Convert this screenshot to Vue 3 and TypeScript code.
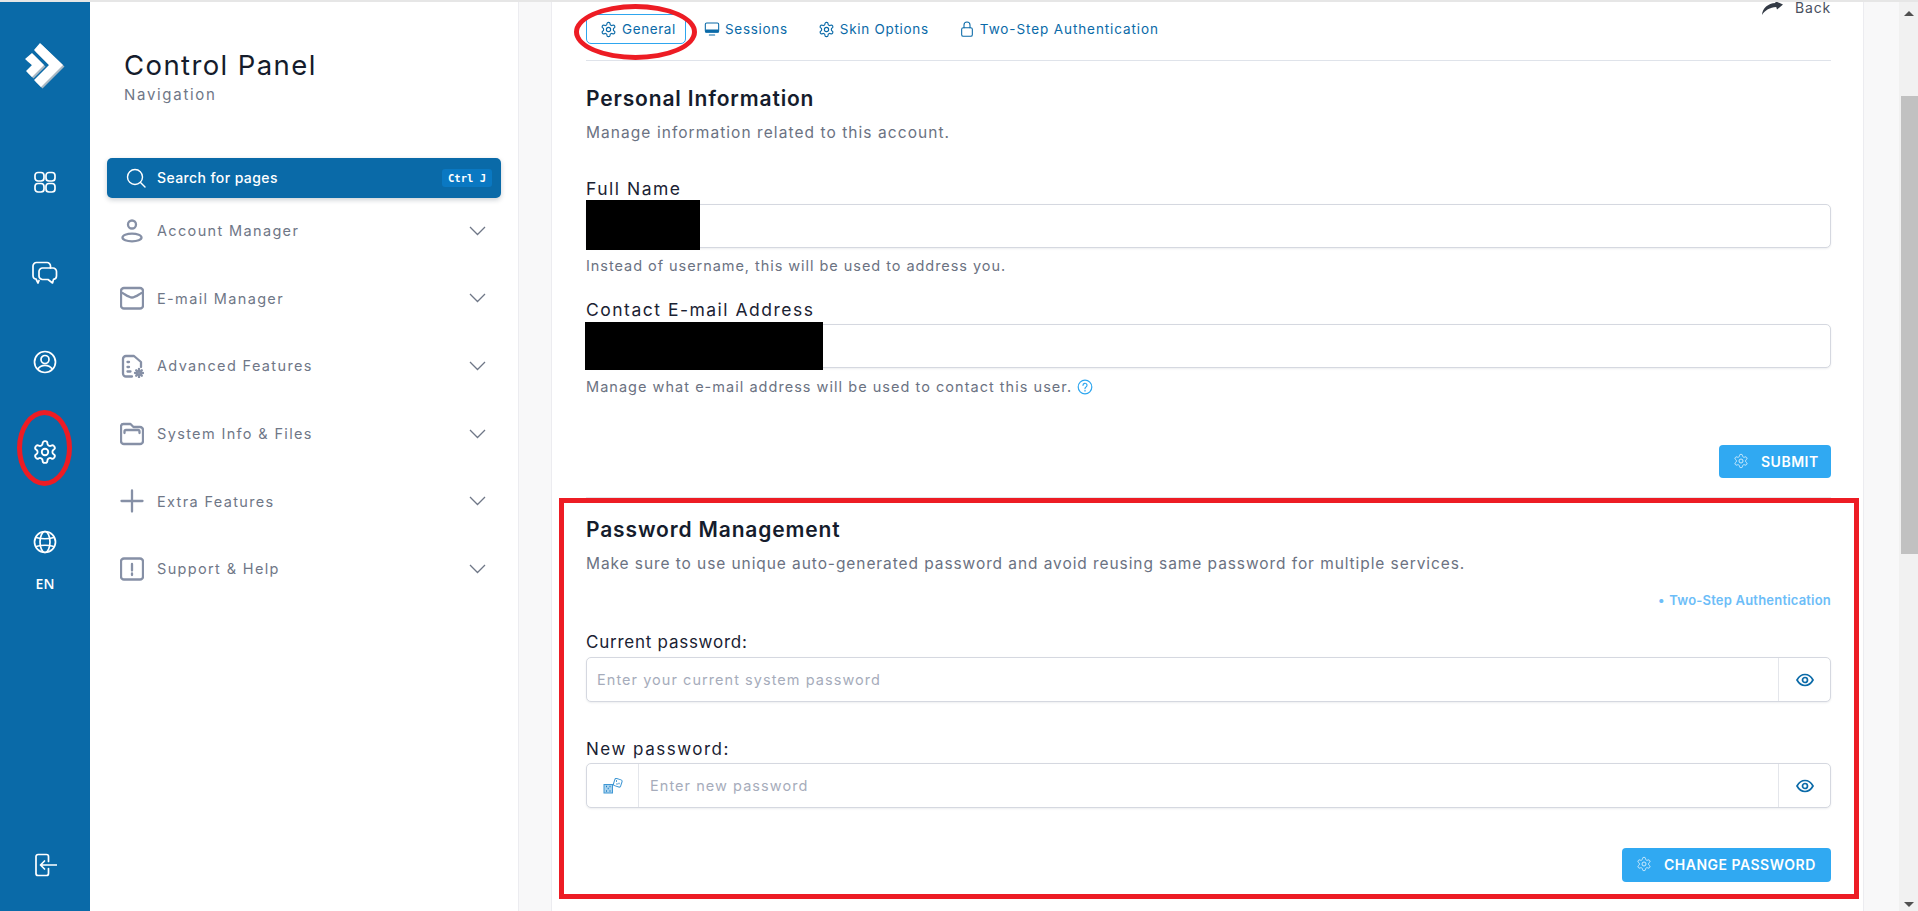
<script setup lang="ts">
interface NavItem {
  label: string
  shapes: string[]
}

const gear =
  'M12.22 2h-.44a2 2 0 0 0-2 2v.18a2 2 0 0 1-1 1.73l-.43.25a2 2 0 0 1-2 0l-.15-.08a2 2 0 0 0-2.73.73l-.22.38a2 2 0 0 0 .73 2.73l.15.1a2 2 0 0 1 1 1.72v.51a2 2 0 0 1-1 1.74l-.15.09a2 2 0 0 0-.73 2.73l.22.38a2 2 0 0 0 2.73.73l.15-.08a2 2 0 0 1 2 0l.43.25a2 2 0 0 1 1 1.73V20a2 2 0 0 0 2 2h.44a2 2 0 0 0 2-2v-.18a2 2 0 0 1 1-1.73l.43-.25a2 2 0 0 1 2 0l.15.08a2 2 0 0 0 2.73-.73l.22-.39a2 2 0 0 0-.73-2.73l-.15-.08a2 2 0 0 1-1-1.74v-.5a2 2 0 0 1 1-1.74l.15-.09a2 2 0 0 0 .73-2.73l-.22-.38a2 2 0 0 0-2.73-.73l-.15.08a2 2 0 0 1-2 0l-.43-.25a2 2 0 0 1-1-1.73V4a2 2 0 0 0-2-2zM15 12a3 3 0 1 1-6 0 3 3 0 0 1 6 0z'

const navItems: NavItem[] = [
  {
    label: 'Account Manager',
    shapes: ['M16 5.500a4 4 0 1 1-8 0 4 4 0 0 1 8 0z', 'M21.500 18.500c0 2.200-4.200 3.800-9.500 3.800s-9.500-1.600-9.500-3.800 4.200-3.800 9.500-3.800 9.500 1.600 9.500 3.800z'],
  },
  {
    label: 'E-mail Manager',
    shapes: ['M4 2h16a3 3 0 0 1 3 3v14.500a3 3 0 0 1-3 3H4a3 3 0 0 1-3-3V5a3 3 0 0 1 3-3z', 'M2.500 7c3.500 2 6.500 4.500 9.500 4.500S18 9 21.500 7'],
  },
  {
    label: 'Advanced Features',
    shapes: [
      'M12 22.500H6a3 3 0 0 1-3-3V5a3 3 0 0 1 3-3h8l7 6v5',
      'M7.500 8h1.500M7.500 13h1.500M7.500 17.500h3',
      'M19 14.800v1.400M19 21.800v1.400M15 19h1.400M21.600 19H23M16.200 16.200l1 1M20.800 20.800l1 1M21.800 16.200l-1 1M17.200 20.800l-1 1M20.500 19a1.500 1.500 0 1 1-3 0 1.500 1.500 0 0 1 3 0z',
    ],
  },
  {
    label: 'System Info & Files',
    shapes: ['M1 18.500v-14A2.500 2.500 0 0 1 3.500 2h7l3 3h6.500a3 3 0 0 1 3 3v11a3 3 0 0 1-3 3H4a3 3 0 0 1-3-3z', 'M4.500 11V9.500A1.500 1.500 0 0 1 6 8h12a1.500 1.500 0 0 1 1.500 1.500V11'],
  },
  {
    label: 'Extra Features',
    shapes: ['M12 1.500v21M1.500 12h21'],
  },
  {
    label: 'Support & Help',
    shapes: ['M4 1.500h16a3 3 0 0 1 3 3v15a3 3 0 0 1-3 3H4a3 3 0 0 1-3-3v-15a3 3 0 0 1 3-3z', 'M12 7v6.500M12 16.500v1.500'],
  },
]
</script>

<template>
  <div class="page">
    <aside class="rail">
      <div class="logo">
        <svg width="42" height="48" viewBox="0 0 42 48">
          <path d="M17.500 2.500l23 22-22 22-7-7 15-15-15-15zM2.500 18.500l7-6 12 12-12 12-6-6 6-6z" fill="#a9b8c4" />
          <path d="M16 1l23 22-22 22-7-7 15-15L10 8zM1 17l7-6 12 12L8 35l-6-6 6-6z" fill="#fff" />
        </svg>
      </div>
      <div class="rail-item">
        <svg width="24" height="24" viewBox="0 0 24 24" class="rail-icon">
          <rect x="2" y="2.500" width="9" height="8.500" rx="3" />
          <rect x="13" y="2.500" width="9" height="8.500" rx="3" />
          <rect x="2" y="13.500" width="9" height="8.500" rx="3" />
          <rect x="13" y="13.500" width="9" height="8.500" rx="3" />
        </svg>
      </div>
      <div class="rail-item rail-chat">
        <svg width="26" height="24" viewBox="0 0 26 24" class="rail-icon">
          <path d="M7 19.500l-1 2.500-2-4c-2 0-3-1.500-3-3.500V5a3.500 3.500 0 0 1 3.500-3.500H15A3.500 3.500 0 0 1 18.500 5v2" />
          <path d="M10.500 7H21a3.500 3.500 0 0 1 3.500 3.500v4.500a3.500 3.500 0 0 1-3 3.400L20.500 22 16 18.500h-5.500A3.500 3.500 0 0 1 7 15v-4.500A3.500 3.500 0 0 1 10.500 7z" />
        </svg>
      </div>
      <div class="rail-item">
        <svg width="24" height="24" viewBox="0 0 24 24" class="rail-icon">
          <circle cx="12" cy="12" r="10.500" />
          <circle cx="12" cy="9.500" r="4" />
          <path d="M4.800 19c2-2.600 4.400-3.600 7.200-3.600s5.200 1 7.200 3.600" />
        </svg>
      </div>
      <div class="rail-item">
        <svg width="26" height="26" viewBox="0 0 24 24" class="rail-icon"><path :d="gear" /></svg>
      </div>
      <div class="rail-item">
        <svg width="24" height="24" viewBox="0 0 24 24" class="rail-icon">
          <circle cx="12" cy="12" r="10.500" />
          <ellipse cx="12" cy="12" rx="5" ry="10.500" />
          <path d="M3 7.500c5.500 1.500 12.500 1.500 18 0M3 16.500c5.500-1.500 12.500-1.500 18 0" />
        </svg>
        <span class="lang">EN</span>
      </div>
      <div class="rail-exit">
        <svg width="22" height="24" viewBox="0 0 22 24" class="rail-icon">
          <path d="M13.500 8.500v-5a2 2 0 0 0-2-2H3a2 2 0 0 0-2 2v17a2 2 0 0 0 2 2h8.500a2 2 0 0 0 2-2v-5" />
          <path d="M21.500 12H6M9.500 8l-4 4 4 4" />
        </svg>
      </div>
    </aside>

    <nav class="nav">
      <h1 class="nav-title">Control Panel</h1>
      <p class="nav-sub">Navigation</p>
      <button class="search" type="button">
        <svg width="20" height="20" viewBox="0 0 20 20" class="search-icon">
          <circle cx="9" cy="9" r="7.500" />
          <path d="M14.500 14.500L19 19" />
        </svg>
        <span class="search-label">Search for pages</span>
        <kbd class="kbd">Ctrl J</kbd>
      </button>
      <a v-for="item in navItems" :key="item.label" class="nav-row">
        <svg width="24" height="24" viewBox="0 0 24 24" class="nav-icon">
          <path v-for="d in item.shapes" :key="d" :d="d" />
        </svg>
        <span class="nav-label">{{ item.label }}</span>
        <svg width="17" height="10" viewBox="0 0 17 10" class="chevron"><path d="M1 1l7.500 7.500L16 1" /></svg>
      </a>
    </nav>

    <div class="gutter gutter-left"></div>

    <main class="main">
      <header class="tabs">
        <a class="tab tab-active">
          <svg width="17" height="17" viewBox="0 0 24 24" class="tab-icon"><path :d="gear" /></svg>
          General
        </a>
        <a class="tab">
          <svg width="16" height="16" viewBox="0 0 24 24" class="tab-icon">
            <rect x="2" y="3" width="20" height="14" rx="2" />
            <path d="M3 13.500h18v3H3z" fill="#0a6aa8" />
            <path d="M8 21h8" />
          </svg>
          Sessions
        </a>
        <a class="tab">
          <svg width="17" height="17" viewBox="0 0 24 24" class="tab-icon"><path :d="gear" /></svg>
          Skin Options
        </a>
        <a class="tab tab-last">
          <svg width="16" height="16" viewBox="0 0 24 24" class="tab-icon">
            <rect x="4" y="10" width="16" height="13" rx="2.500" />
            <path d="M7.500 10V6a4.500 4.500 0 0 1 9 0v4" />
          </svg>
          Two-Step Authentication
        </a>
        <a class="back">
          <svg width="21" height="14" viewBox="0 0 21 14"><path d="M0 14C.5 7 6 2.500 13.500 2L13 0l8 3.500-6 5-.8-2.500C8 6.500 3 9 0 14z" fill="#333a45" /></svg>
          Back
        </a>
      </header>

      <section class="personal">
        <h2 class="heading">Personal Information</h2>
        <p class="desc">Manage information related to this account.</p>

        <label class="label label-name">Full Name</label>
        <div class="field field-text">
          <input class="input" type="text" />
          <span class="redact redact-name"></span>
        </div>
        <p class="hint">Instead of username, this will be used to address you.</p>

        <label class="label label-mail">Contact E-mail Address</label>
        <div class="field field-text field-mail">
          <input class="input" type="text" />
          <span class="redact redact-mail"></span>
        </div>
        <p class="hint">
          Manage what e-mail address will be used to contact this user.
          <svg width="16" height="16" viewBox="0 0 16 16" class="help">
            <circle cx="8" cy="8" r="6.800" />
            <path d="M6 6.300a2 2 0 1 1 3 1.700c-.7.400-1 .8-1 1.600M8 11.300v.8" />
          </svg>
        </p>

        <div class="actions actions-submit">
          <button class="btn btn-submit" type="button">
            <svg width="16" height="16" viewBox="0 0 24 24" class="btn-icon"><path :d="gear" /></svg>
            SUBMIT
          </button>
        </div>
      </section>

      <section class="password">
        <h2 class="heading heading-pass">Password Management</h2>
        <p class="desc">Make sure to use unique auto-generated password and avoid reusing same password for multiple services.</p>
        <div class="step-link"><span class="step-dot">•</span> Two-Step Authentication</div>

        <label class="label label-current">Current password:</label>
        <div class="field field-pass">
          <input class="input" type="text" placeholder="Enter your current system password" />
          <span class="addon addon-eye">
            <svg width="18" height="14" viewBox="0 0 18 14" class="eye">
              <path d="M1 7c2-3.600 4.800-5.500 8-5.500S15 3.400 17 7c-2 3.600-4.800 5.500-8 5.500S3 10.600 1 7z" />
              <circle cx="9" cy="7" r="2.500" />
            </svg>
          </span>
        </div>

        <label class="label label-new">New password:</label>
        <div class="field field-pass">
          <span class="addon addon-dice">
            <svg width="20" height="16" viewBox="0 0 20 16" class="dice">
              <rect x="1" y="6.500" width="8.500" height="8.500" fill="#a9d3ef" />
              <rect x="11" y="1" width="7.500" height="7.500" rx="1.500" transform="rotate(18 14.750 4.750)" />
              <path class="dice-dots" d="M3 8.500h1M6.500 8.500h1M4.700 10.500h1M3 13h1M6.500 13h1M13 3h1M15.500 5.500h1M13.500 6h1" />
            </svg>
          </span>
          <input class="input" type="text" placeholder="Enter new password" />
          <span class="addon addon-eye">
            <svg width="18" height="14" viewBox="0 0 18 14" class="eye">
              <path d="M1 7c2-3.600 4.800-5.500 8-5.500S15 3.400 17 7c-2 3.600-4.800 5.500-8 5.500S3 10.600 1 7z" />
              <circle cx="9" cy="7" r="2.500" />
            </svg>
          </span>
        </div>

        <div class="actions actions-change">
          <button class="btn btn-change" type="button">
            <svg width="16" height="16" viewBox="0 0 24 24" class="btn-icon"><path :d="gear" /></svg>
            CHANGE PASSWORD
          </button>
        </div>
      </section>
    </main>

    <div class="gutter gutter-right"></div>

    <div class="scrollbar">
      <span class="arrow arrow-up"></span>
      <span class="thumb"></span>
      <span class="arrow arrow-down"></span>
    </div>

    <!-- Red annotations drawn over the screenshot -->
    <span class="mark mark-rail"></span>
    <span class="mark mark-tab"></span>
    <span class="mark-box"></span>
  </div>
</template>

<style>
html,
body {
  margin: 0;
  overflow: hidden;
  background: #fff;
}
</style>

<style scoped>
* {
  box-sizing: border-box;
}
.page {
  position: relative;
  display: flex;
  width: 1918px;
  height: 911px;
  overflow: hidden;
  border-top: 2px solid #e6e6e6;
  font-family: Inter, "Open Sans", sans-serif;
  color: #1a2233;
}

/* rail */
.rail {
  flex: 0 0 90px;
  display: flex;
  flex-direction: column;
  align-items: center;
  background: #0a6aa8;
}
.logo {
  height: 135px;
  padding-top: 40px;
}
.rail-item {
  position: relative;
  flex: 0 0 90px;
  width: 100%;
  display: flex;
  align-items: center;
  justify-content: center;
}
.rail-chat {
  padding-top: 2px;
}
.rail-icon {
  fill: none;
  stroke: #fff;
  stroke-width: 1.7;
  stroke-linecap: round;
  stroke-linejoin: round;
}
.lang {
  position: absolute;
  left: 0;
  right: 0;
  top: 77px;
  text-align: center;
  color: #fff;
  font-size: 14px;
  font-family: "Open Sans", sans-serif;
  font-weight: 600;
}
.rail-exit {
  margin-top: auto;
  padding-bottom: 30px;
  padding-left: 2px;
}

/* nav */
.nav {
  flex: 0 0 429px;
  padding: 0 17px;
  background: #fff;
  border-right: 1px solid #ececf0;
}
.nav-title {
  margin: 46px 0 0 17px;
  font-size: 27.500px;
  line-height: 34px;
  font-weight: 400;
  letter-spacing: 1.4px;
  color: #151c2c;
}
.nav-sub {
  margin: 3px 0 0 17px;
  font-size: 15px;
  line-height: 20px;
  letter-spacing: 1.700px;
  color: #6f7787;
}
.search {
  display: flex;
  align-items: center;
  width: 100%;
  height: 40px;
  margin-top: 53px;
  margin-bottom: -1px;
  padding: 0 9px 0 19px;
  border: 0;
  border-radius: 5px;
  background: #0a6aa8;
  box-shadow: 0 2px 5px rgba(20, 40, 60, 0.22);
  color: #fff;
  font-family: inherit;
}
.search-icon {
  fill: none;
  stroke: #fff;
  stroke-width: 1.4;
  stroke-linecap: round;
}
.search-label {
  margin-left: 11px;
  padding-bottom: 2px;
  font-size: 14px;
  font-weight: 500;
  letter-spacing: 0.4px;
}
.kbd {
  margin-left: auto;
  width: 50px;
  height: 18px;
  border-radius: 3px;
  background: #0a78c2;
  color: #fff;
  font-family: "DejaVu Sans Mono", monospace;
  font-size: 10.500px;
  font-weight: 700;
  line-height: 18px;
  text-align: center;
}
.nav-row {
  display: flex;
  align-items: center;
  height: 67.6px;
  padding-left: 13px;
  padding-right: 15px;
}
.nav-icon {
  flex: none;
  fill: none;
  stroke: #8690a6;
  stroke-width: 2.300;
  stroke-linecap: round;
  stroke-linejoin: round;
}
.nav-label {
  margin-left: 13px;
  font-size: 14.500px;
  letter-spacing: 1.350px;
  color: #6f7787;
}
.chevron {
  margin-left: auto;
  fill: none;
  stroke: #6f7787;
  stroke-width: 1.3;
}

.gutter {
  background: #f8f8f9;
}
.gutter-left {
  flex: 0 0 32px;
}
.gutter-right {
  flex: 0 0 35px;
}

/* main */
.main {
  flex: 0 0 1313px;
  padding: 0 32px 0 34px;
  background: #fff;
  border-left: 1px solid #ececf0;
  border-right: 1px solid #ececf0;
}
.tabs {
  position: relative;
  display: flex;
  align-items: flex-start;
  height: 59px;
  padding-top: 12px;
  border-bottom: 1px solid #dfe3ea;
}
.tab {
  display: flex;
  align-items: center;
  gap: 5px;
  height: 30px;
  padding: 0 12px 0 13px;
  margin-right: 3px;
  border: 1px solid transparent;
  border-radius: 5px;
  font-size: 13.500px;
  letter-spacing: 0.7px;
  white-space: nowrap;
  color: #0a6aa8;
}
.tab-active {
  border-color: #2ea6ef;
  width: 100px;
  margin-right: 4px;
  letter-spacing: 0.6px;
}
.tab-last {
  letter-spacing: 0.9px;
}
.tab-icon {
  flex: none;
  fill: none;
  stroke: #0a6aa8;
  stroke-width: 1.6;
  stroke-linecap: round;
  stroke-linejoin: round;
}
.back {
  display: flex;
  align-items: center;
  gap: 12px;
  position: absolute;
  right: 0;
  top: -2px;
  font-size: 14px;
  letter-spacing: 0.8px;
  line-height: 16px;
  color: #4a5160;
}
.heading {
  margin: 24px 0 0;
  font-size: 21px;
  line-height: 28px;
  font-weight: 600;
  letter-spacing: 0.85px;
  color: #151c2c;
}
.heading-pass {
  margin-top: 18px;
}
.desc {
  margin: 10px 0 0;
  font-size: 15.500px;
  line-height: 20px;
  letter-spacing: 0.92px;
  color: #6b7282;
}
.personal .desc {
  letter-spacing: 1.06px;
}
.label {
  display: block;
  font-size: 17.500px;
  line-height: 20px;
  letter-spacing: 1.5px;
  color: #1a2233;
}
.label-name {
  margin-top: 36px;
  margin-bottom: 5px;
}
.label-mail {
  margin-top: 24px;
  margin-bottom: 4px;
}
.label-current {
  margin-top: 23px;
  margin-bottom: 5px;
  font-size: 17px;
  letter-spacing: 0.75px;
}
.label-new {
  margin-top: 37px;
  margin-bottom: 4px;
  font-size: 17px;
}
.field {
  position: relative;
  display: flex;
  border: 1px solid #d5d8e0;
  border-radius: 5px;
  background: #fff;
  box-shadow: 0 1px 2px rgba(30, 40, 60, 0.08);
}
.field-text {
  height: 44px;
}
.field-pass {
  height: 45px;
}
.input {
  flex: 1;
  min-width: 0;
  padding: 0 10px;
  border: 0;
  outline: 0;
  background: transparent;
  font-family: inherit;
  font-size: 14.500px;
  letter-spacing: 1.05px;
}
.addon-dice + .input {
  padding-left: 11px;
}
.input::placeholder {
  color: #a6acbb;
  opacity: 1;
}
.addon {
  flex: none;
  display: flex;
  align-items: center;
  justify-content: center;
}
.addon-eye {
  width: 52px;
  border-left: 1px solid #e4e6eb;
}
.addon-dice {
  width: 52px;
  border-right: 1px solid #e4e6eb;
}
.eye {
  fill: none;
  stroke: #0a6aa8;
  stroke-width: 1.7;
}
.dice {
  fill: none;
  stroke: #3f97d4;
  stroke-width: 1;
}
.dice-dots {
  stroke: #1f7fc2;
  stroke-width: 1.4;
}
.redact {
  position: absolute;
  left: -1px;
  background: #000;
}
.redact-name {
  top: -5px;
  width: 114px;
  height: 50px;
}
.redact-mail {
  top: -3px;
  left: -2px;
  width: 238px;
  height: 48px;
}
.hint {
  display: flex;
  align-items: center;
  gap: 5px;
  margin: 8px 0 0;
  font-size: 14.500px;
  line-height: 20px;
  letter-spacing: 0.95px;
  color: #6b7282;
}
.field-mail + .hint {
  margin-top: 9px;
  letter-spacing: 1.03px;
}
.help {
  fill: none;
  stroke: #2ea6ef;
  stroke-width: 1.2;
  stroke-linecap: round;
}
.actions {
  display: flex;
  justify-content: flex-end;
}
.actions-submit {
  margin-top: 48px;
  padding-bottom: 19px;
  border-bottom: 1px solid #e4e6eb;
}
.actions-change {
  margin-top: 40px;
}
.btn {
  display: flex;
  align-items: center;
  gap: 12px;
  border: 0;
  border-radius: 4px;
  background: #30a9f2;
  color: #fff;
  font-family: inherit;
  font-size: 14px;
  font-weight: 600;
  letter-spacing: 0.5px;
}
.btn-submit {
  width: 112px;
  height: 33px;
  padding: 0 0 1px 14px;
}
.btn-change {
  width: 209px;
  height: 34px;
  padding: 0 0 2px 14px;
}
.btn-icon {
  flex: none;
  fill: none;
  stroke: #d7eefc;
  stroke-width: 1.4;
}
.step-link {
  margin-top: 17px;
  font-size: 13px;
  line-height: 18px;
  font-weight: 600;
  letter-spacing: 0.2px;
  text-align: right;
  color: #6cbdf8;
}
.step-dot {
  margin-right: 1px;
}

/* scrollbar */
.scrollbar {
  position: relative;
  flex: 0 0 19px;
  background: #f1f1f1;
}
.thumb {
  position: absolute;
  top: 94px;
  left: 2px;
  right: 0;
  height: 458px;
  background: #c1c1c1;
}
.arrow {
  position: absolute;
  left: 5px;
  width: 0;
  height: 0;
  border-left: 5px solid transparent;
  border-right: 5px solid transparent;
}
.arrow-up {
  top: 9px;
  border-bottom: 5px solid #505050;
}
.arrow-down {
  bottom: 4px;
  border-top: 5px solid #505050;
}

/* annotations */
.mark {
  position: absolute;
  border: 5px solid #ed1c24;
  border-radius: 50%;
}
.mark-rail {
  left: 17px;
  top: 408px;
  width: 55px;
  height: 76px;
}
.mark-tab {
  left: 574px;
  top: 2px;
  width: 123px;
  height: 56px;
}
.mark-box {
  position: absolute;
  left: 559px;
  top: 496px;
  width: 1300px;
  height: 401px;
  border: 5px solid #ed1c24;
}
</style>
